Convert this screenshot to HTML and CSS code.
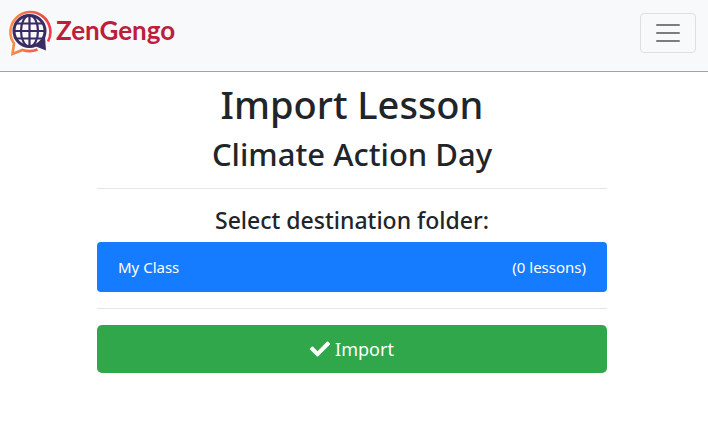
FILE: index.html
```html
<!DOCTYPE html>
<html lang="en">
<head>
	<meta charset="UTF-8">
	<meta name="viewport" content="width=device-width, initial-scale=1">
	<title>Import Lesson - ZenGengo</title>
	<link rel="stylesheet" href="styles.css">
</head>
<body>
	<nav class="navbar">
		<a class="brand" href="#">
			<svg class="brand-logo" viewBox="0 0 44 48" aria-hidden="true">
				<defs>
					<linearGradient id="ring" x1="0" y1="0" x2="1" y2="0">
						<stop offset="0" stop-color="#f9904a"/>
						<stop offset="1" stop-color="#f03c46"/>
					</linearGradient>
				</defs>
				<!-- outer bubble -->
				<path d="M40 32.500A20 20 0 1 0 6 34.500L4.500 45L14.500 41Q22 43.500 29.500 40.500" fill="none" stroke="url(#ring)" stroke-width="2.600"/>
				<!-- globe bubble -->
				<path d="M28 37.500L38 41.500L37 28Z" fill="#3b2b63"/>
				<g fill="none" stroke="#3b2b63">
					<circle cx="21.500" cy="22" r="15.500" fill="#f8f9fa" stroke-width="3"/>
					<path d="M21.500 7V37M8 14.500H35M6 22H37M8 29.500H35" stroke-width="2.200"/>
					<ellipse cx="21.500" cy="22" rx="8.500" ry="15.500" stroke-width="2.200"/>
				</g>
			</svg>
			<span class="brand-name">ZenGengo</span>
		</a>
		<button class="toggler" type="button" aria-label="Toggle navigation">
			<svg viewBox="0 0 30 30" aria-hidden="true">
				<path d="M4 7h22M4 15h22M4 23h22" stroke="#7c7c7d" stroke-width="2" stroke-linecap="round"/>
			</svg>
		</button>
	</nav>

	<main class="container">
		<h1>Import Lesson</h1>
		<h2>Climate Action Day</h2>
		<hr>
		<h4>Select destination folder:</h4>
		<div class="list-group">
			<a class="list-item active" href="#">
				<span>My Class</span>
				<span>(0 lessons)</span>
			</a>
		</div>
		<hr>
		<button class="btn-import" type="button">
			<svg viewBox="0 0 512 512" aria-hidden="true">
				<path fill="currentColor" d="M173.898 439.404l-166.400-166.400c-9.997-9.997-9.997-26.206 0-36.204l36.203-36.204c9.997-9.998 26.207-9.998 36.204 0L192 312.690 432.095 72.596c9.997-9.997 26.207-9.997 36.204 0l36.203 36.204c9.997 9.997 9.997 26.206 0 36.204l-294.400 294.401c-9.998 9.997-26.207 9.997-36.204-.001z"/>
			</svg>
			<span>Import</span>
		</button>
	</main>
</body>
</html>
```
FILE: styles.css
```css
* {
	box-sizing: border-box;
}
body {
	margin: 0;
	background: #fff;
	color: #212529;
	font-family: "Segoe UI", "Noto Sans", "Open Sans", sans-serif;
	font-size: 15px;
	line-height: 24px;
}
a {
	text-decoration: none;
}
.navbar {
	display: flex;
	align-items: flex-start;
	justify-content: space-between;
	height: 72px;
	padding: 9px 12px 0 8px;
	background: #f8f9fa;
	border-bottom: 1px solid #a3a3a3;
}
.brand {
	display: flex;
	align-items: flex-start;
	gap: 4px;
	color: #be1e3c;
}
.brand-logo {
	width: 44px;
	height: 48px;
}
.brand-name {
	font-family: Lato, sans-serif;
	font-size: 26px;
	font-weight: 700;
	line-height: 42px;
}
.toggler {
	width: 56px;
	height: 40px;
	margin-top: 4px;
	padding: 0 12px;
	background: none;
	border: 1px solid #dedfe0;
	border-radius: 4px;
}
.toggler svg {
	display: block;
	width: 30px;
	height: 30px;
}
.container {
	max-width: 540px;
	margin: 0 auto;
	padding: 8px 17px 16px 13px;
	text-align: center;
}
h1,
h2,
h4 {
	margin: 0 0 8px;
	font-weight: 500;
}
h1 {
	font-size: 38px;
	line-height: 48px;
}
h2 {
	font-size: 31px;
	line-height: 36px;
}
h4 {
	margin-bottom: 6px;
	font-size: 23px;
	line-height: 31px;
}
hr {
	margin: 16px 0;
	border: 0;
	border-top: 1px solid #e5e5e5;
}
.list-item {
	display: flex;
	justify-content: space-between;
	padding: 13px 21px;
	border-radius: 4px;
}
.list-item.active {
	background: #157cff;
	color: #fff;
}
.btn-import {
	display: flex;
	align-items: center;
	justify-content: center;
	gap: 5px;
	width: 100%;
	height: 48px;
	padding: 0;
	background: #31a74b;
	border: 0;
	border-radius: 5px;
	color: #fff;
	font-family: inherit;
	font-size: 18px;
	line-height: 30px;
}
.btn-import svg {
	width: 20px;
	height: 20px;
}
```
